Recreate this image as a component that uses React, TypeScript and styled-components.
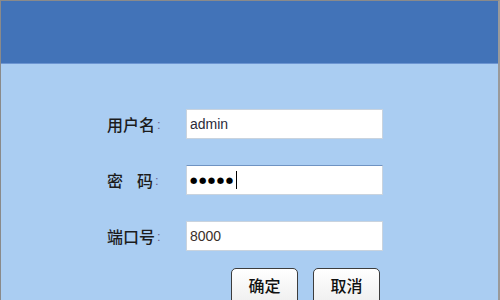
import styled, { createGlobalStyle } from 'styled-components';

const GlobalStyle = createGlobalStyle`
    html, body {
        margin: 0;
        padding: 0;
        width: 500px;
        height: 300px;
        overflow: hidden;
        background: #aacdf2;
    }
`;

const Frame = styled.div`
    box-sizing: border-box;
    width: 500px;
    height: 300px;
    border-top: 1px solid #8a8a8a;
    border-left: 1px solid #8a8a8a;
    border-right: 2px solid #9a9a9a;
    display: flex;
    flex-direction: column;
    overflow: hidden;
`;

const Header = styled.div`
    height: 62px;
    flex-shrink: 0;
    background: #4273b8;
    border-bottom: 1px solid #6c95d2;
`;

const Body = styled.div`
    flex: 1;
    background: #aacdf2;
    padding: 45px 0 0 106px;
    display: flex;
    flex-direction: column;
`;

const Form = styled.div`
    display: grid;
    grid-template-columns: 79px 197px;
    row-gap: 26px;
    align-items: center;
`;

const Label = styled.div`
    font-family: "Noto Sans CJK SC", "Liberation Sans", sans-serif;
    font-size: 16px;
    font-weight: 500;
    color: #1c1c1c;
    display: flex;
    align-items: center;
    white-space: nowrap;
`;

const Gap = styled.span`
    display: inline-block;
    width: 14px;
`;

const Colon = styled.span`
    font-family: "Liberation Sans", sans-serif;
    font-size: 13px;
    color: #6a5d8e;
    margin-left: 2px;
`;

const Field = styled.div<{ $focused?: boolean }>`
    box-sizing: border-box;
    height: 30px;
    background: #fff;
    border: 1px solid #c9d3de;
    border-top-color: ${(p) => (p.$focused ? '#6f93c2' : '#c9d3de')};
    padding-left: 3px;
    display: flex;
    align-items: center;
    font-family: "Liberation Sans", sans-serif;
    font-size: 14px;
    color: ${(p) => p.color || '#2b2b3a'};
`;

const Dots = styled.span`
    font-family: "DejaVu Sans", sans-serif;
    font-size: 8.5px;
    letter-spacing: 1.5px;
    color: #000;
`;

const Caret = styled.span`
    display: inline-block;
    width: 1px;
    height: 18px;
    background: #000;
    margin-left: 1px;
`;

const Buttons = styled.div`
    display: flex;
    gap: 15px;
    margin-top: 17px;
    padding-left: 124px;
`;

const Button = styled.button`
    box-sizing: border-box;
    width: 67px;
    height: 40px;
    padding: 0 0 6px;
    border: 1px solid #3d3d3d;
    border-radius: 5px;
    background: linear-gradient(#ffffff, #ededed);
    font-family: "Noto Sans CJK SC", sans-serif;
    font-size: 16px;
    font-weight: 500;
    color: #111;
    cursor: pointer;
`;

export default function App() {
    return (
        <>
            <GlobalStyle />
            <Frame>
                <Header />
                <Body>
                    <Form>
                        <Label>
                            用户名<Colon>:</Colon>
                        </Label>
                        <Field>admin</Field>
                        <Label>
                            密<Gap />码<Colon>:</Colon>
                        </Label>
                        <Field $focused>
                            <Dots>●●●●●</Dots>
                            <Caret />
                        </Field>
                        <Label>
                            端口号<Colon>:</Colon>
                        </Label>
                        <Field color="#3a2f2a">8000</Field>
                    </Form>
                    <Buttons>
                        <Button>确定</Button>
                        <Button>取消</Button>
                    </Buttons>
                </Body>
            </Frame>
        </>
    );
}
